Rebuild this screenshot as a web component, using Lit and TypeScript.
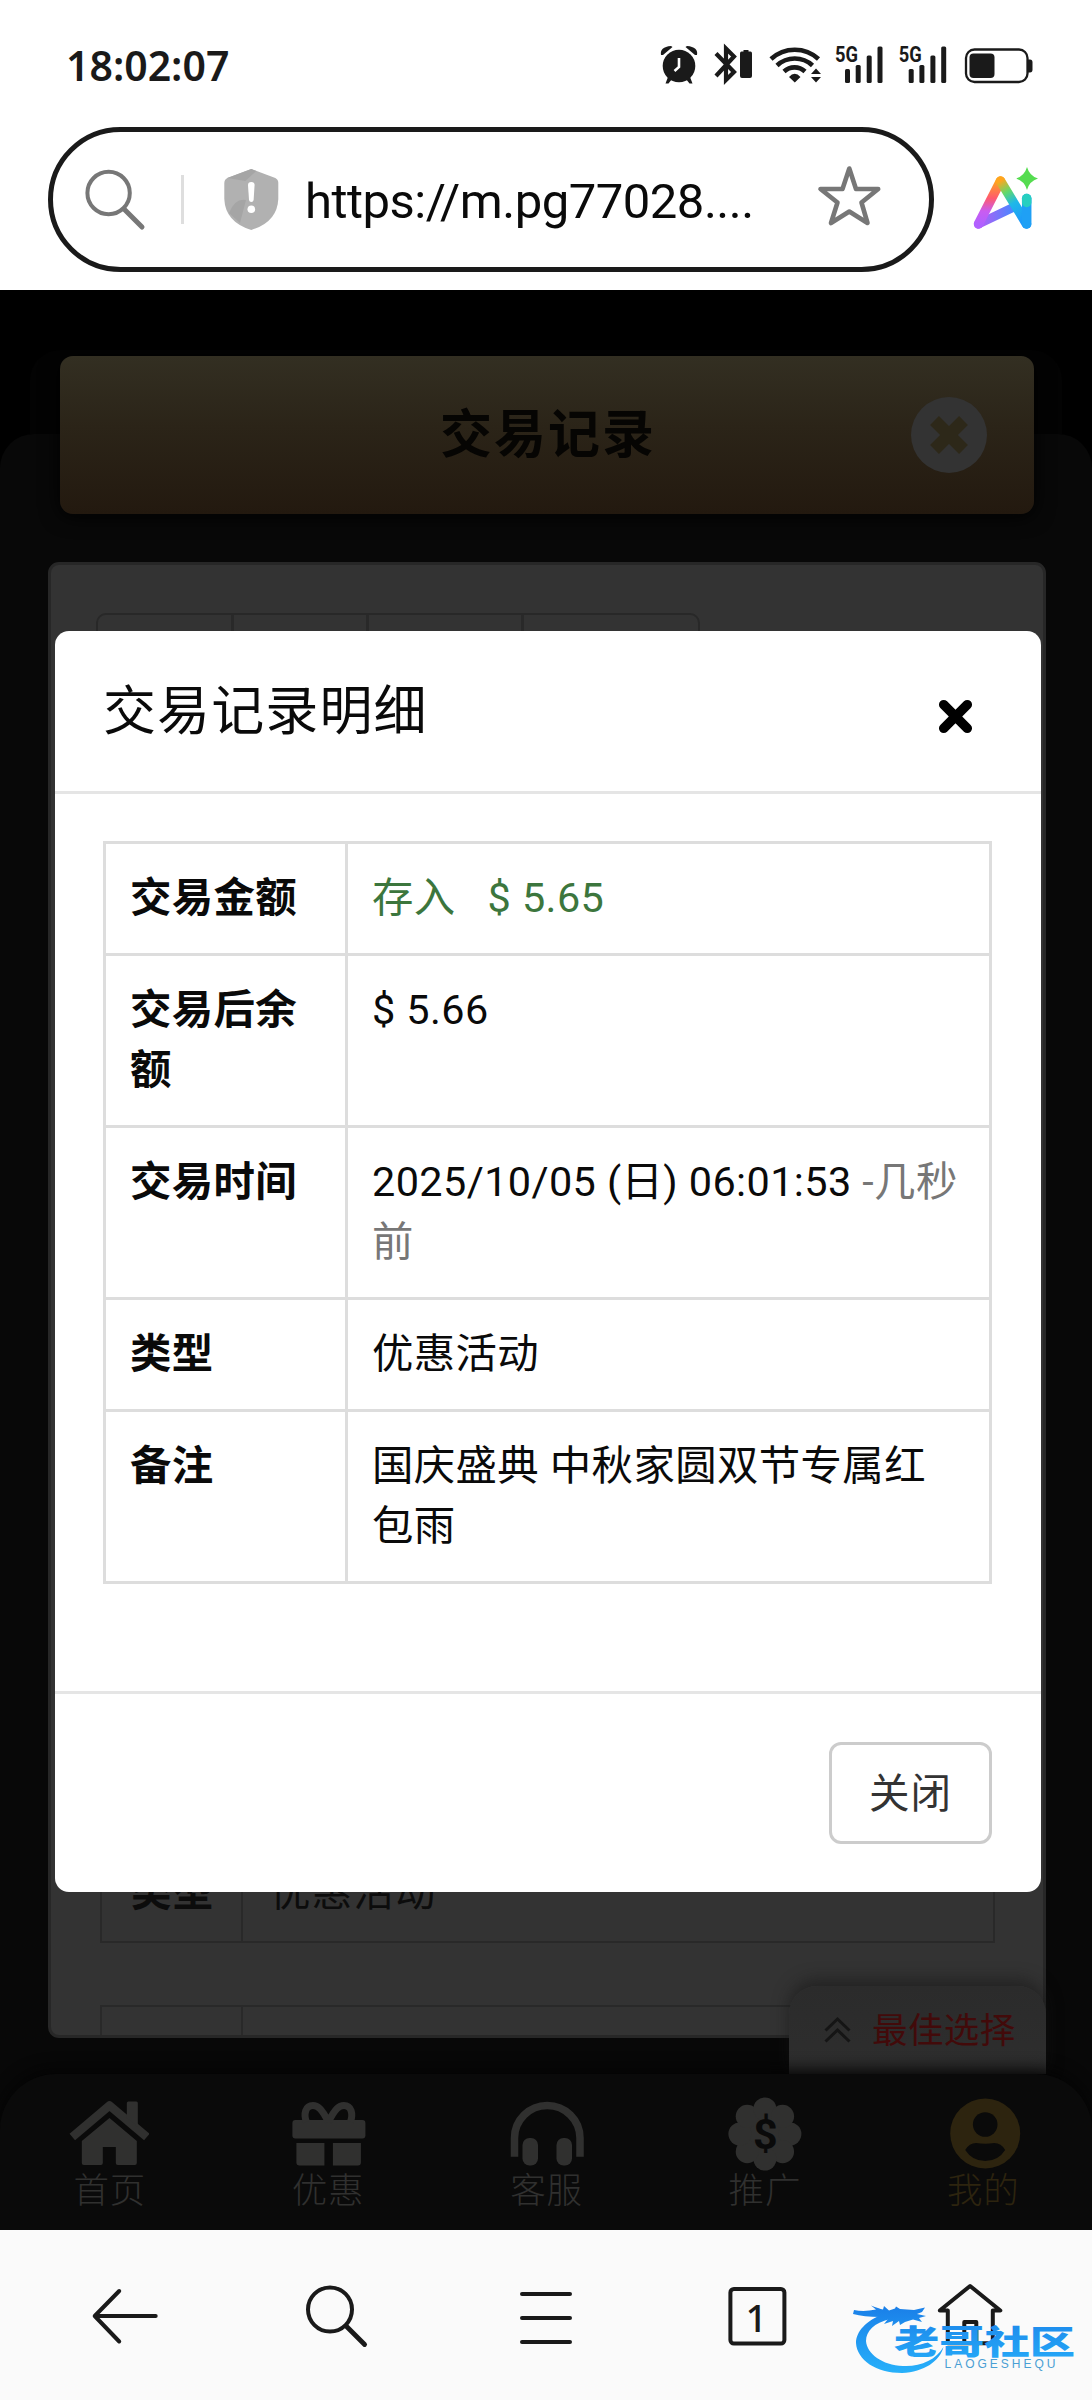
import { LitElement, html, svg, css } from "lit";
import { customElement, property } from "lit/decorators.js";

const SANS = css`Roboto, "Noto Sans CJK SC", sans-serif`;

@customElement("status-bar")
class StatusBar extends LitElement {
  static styles = css`
    :host { display: flex; justify-content: space-between; align-items: center; height: 127px; padding: 0 56px 0 66px; box-sizing: border-box; }
    .time { font: 600 41px/50px "Noto Sans", sans-serif; color: #1a1a1a; letter-spacing: 0; margin-top: 3px; }
    .icons { display: block; margin-top: 3px; }
    .net { font: 700 22px Roboto, sans-serif; }
  `;

  private signal(x: number) {
    return svg`
      <text class="net" x=${x - 10} y="63" textLength="23" lengthAdjust="spacingAndGlyphs">5G</text>
      <rect x=${x} y="70" width="5" height="14" rx="1.5"/>
      <rect x=${x + 10.7} y="66" width="5" height="18" rx="1.5"/>
      <rect x=${x + 21.7} y="56.5" width="5" height="27.5" rx="1.5"/>
      <rect x=${x + 32.5} y="47.5" width="5" height="36.5" rx="1.5"/>`;
  }

  render() {
    return html`
      <span class="time">18:02:07</span>
      <svg class="icons" width="380" height="50" viewBox="656 41 380 50" fill="#1a1a1a">
        <circle cx="679" cy="67" r="16.3"/>
        <path d="M661 56q-1.500-8 10-9l1.500 1-9.500 8zM697 56q1.500-8-10-9l-1.500 1 9.500 8zM668 78l4 2-3.500 4.500h-3zM690 78l-4 2 3.500 4.500h3z"/>
        <path d="M679 59v9l-4.500 4" fill="none" stroke="#fff" stroke-width="2.600"/>
        <path d="M716 54.500l18 18.500-8 8V49.500l8 8L716 77" fill="none" stroke="#1a1a1a" stroke-width="4.200" stroke-linejoin="miter"/>
        <path d="M743.500 51h5v1.500h2q1.500 0 1.500 2V77q0 2-2 2h-8q-2 0-2-2V54.500q0-2 1.500-2h2z"/>
        <g fill="none" stroke="#1a1a1a" stroke-width="4.600">
          <path d="M771 60a35 35 0 0 1 47.500 0M777 66.500a26 26 0 0 1 35.500 0M784 72.500a15.500 15.500 0 0 1 21 0"/>
        </g>
        <path d="M789 78q5.700-6.500 11.500 0l-5.700 5.500zM811 75l5-5.500 5 5.500zM811 78h10l-5 5.500z"/>
        ${this.signal(845)}
        ${this.signal(908.7)}
        <rect x="966" y="50.500" width="61.500" height="32.500" rx="8.500" fill="none" stroke="#1a1a1a" stroke-width="2.300"/>
        <rect x="969.500" y="54.500" width="25" height="24.500" rx="4"/>
        <path d="M1028 60.500h2q2.500 0 2.500 3v7q0 3-2.500 3h-2z"/>
      </svg>`;
  }
}

@customElement("address-bar")
class AddressBar extends LitElement {
  static styles = css`
    :host { display: flex; height: 163px; padding: 0 0 0 48px; box-sizing: border-box; align-items: flex-start; }
    .pill { display: flex; align-items: center; box-sizing: border-box; width: 886px; height: 145px; border: 5px solid #1a1a1a; border-radius: 73px; padding: 0 47px 0 30px; }
    .lens { width: 64px; height: 70px; flex: none; }
    .divider { width: 3px; height: 49px; background: #dedede; margin: 0 40px 0 34px; }
    .shield { width: 56px; height: 64px; flex: none; margin-left: -1px; }
    .url { flex: 1; margin-left: 26px; font: 400 49px/60px Roboto, sans-serif; letter-spacing: -0.5px; color: #0a0a0a; white-space: nowrap; margin-top: 5px; }
    .star { width: 64px; height: 64px; flex: none; margin-top: -7px; margin-right: 1px; }
    .ai { width: 70px; height: 70px; margin: 37px 0 0 36px; }
  `;

  render() {
    return html`
      <div class="pill">
        <svg class="lens" viewBox="83 165 64 70" fill="none" stroke="#777" stroke-linecap="round">
          <circle cx="108.600" cy="193" r="21.200" stroke-width="4"/>
          <path d="M124.500 209.500L142 227" stroke-width="5"/>
        </svg>
        <span class="divider"></span>
        <svg class="shield" viewBox="223 167 56 64">
          <path d="M251.300 168l24 9q3 1.500 3 5v16q-1 23-27 31-26-8-27-31v-16q0-3.500 3-5z" fill="#b1b1b1"/>
          <path d="M251.300 168l-24 9 18 3 11-10zM229 212q6-15 17-13l-6 23z" fill="#a5a5a5"/>
          <path d="M248 184q0-3 3.300-3t3.300 3l-1 15q-.300 2-2.300 2t-2.300-2z" fill="#fff"/>
          <circle cx="251.300" cy="208.300" r="3.800" fill="#fff"/>
        </svg>
        <span class="url">https://m.pg77028....</span>
        <svg class="star" viewBox="817 164 64 64" fill="none" stroke="#777" stroke-width="4.600" stroke-linejoin="round">
          <path d="M849.300 168.500L856 189h22.200L861.500 202.500 867.500 223 849.300 211.500 831 223 837.500 202.500 820.500 189h22z"/>
        </svg>
      </div>
      <svg class="ai" viewBox="970 165 70 70" fill="none" stroke-width="9.500" stroke-linecap="round" stroke-linejoin="round">
        <defs>
          <linearGradient id="warm" x1="0" y1="0" x2="0" y2="1">
            <stop offset="0" stop-color="#ffa51e"/><stop offset=".4" stop-color="#ff5a6e"/><stop offset=".7" stop-color="#c95cf0"/><stop offset="1" stop-color="#b160ff"/>
          </linearGradient>
          <linearGradient id="cool" gradientUnits="userSpaceOnUse" x1="1000" y1="182" x2="1027" y2="226">
            <stop offset="0" stop-color="#ffa51e"/><stop offset=".25" stop-color="#63d96a"/><stop offset=".5" stop-color="#1fb8e8"/><stop offset="1" stop-color="#1e90ff"/>
          </linearGradient>
          <linearGradient id="base" x1="0" y1="0" x2="1" y2="0">
            <stop offset="0" stop-color="#b95cf5"/><stop offset="1" stop-color="#4a86ff"/>
          </linearGradient>
        </defs>
        <path d="M978.500 225L1013 208.500" stroke="url(#base)" stroke-width="9"/>
        <path d="M1000.500 182L978.500 225" stroke="url(#warm)"/>
        <path d="M1000.500 182L1026.500 225" stroke="url(#cool)"/>
        <path d="M1026.700 199.500v25.500" stroke="#1fa0f5"/>
        <path d="M1026.700 199.500v4" stroke="#27cfc0"/>
        <path d="M1027 168q2.500 9 11 11.500-8.500 2.500-11 11.500-2.500-9-11-11.500 8.500-2.500 11-11.500z" fill="#55dc50" stroke="none"/>
      </svg>`;
  }
}

interface DetailRow { label: string; value: unknown; }

@customElement("detail-modal")
class DetailModal extends LitElement {
  static styles = css`
    :host { display: flex; flex-direction: column; background: #fff; border-radius: 14px; color: #0a0a0a; font-family: ${SANS}; }
    .head { display: flex; justify-content: space-between; align-items: center; box-sizing: border-box; height: 163px; padding: 0 63px 0 48px; border-bottom: 3px solid #e5e5e5; }
    .title { font-size: 53px; line-height: 60px; letter-spacing: 1.1px; margin-top: 1px; }
    .close { width: 45px; height: 45px; margin-top: 10px; }
    .body { box-sizing: border-box; height: 900px; padding: 47px 49px 0 48px; border-bottom: 3px solid #e5e5e5; }
    .table { display: grid; grid-template-columns: 242px 1fr; border: solid #ddd; border-width: 3px 0 0 3px; }
    .th, .td { box-sizing: border-box; padding: 24px 22px 25px 24px; border: solid #ddd; border-width: 0 3px 3px 0; font-size: 41.400px; line-height: 60px; letter-spacing: .4px; }
    .th { font-weight: 700; padding-right: 20px; }
    .in { color: #3c763d; }
    .amount { margin-left: 32px; }
    .ago { color: #777; }
    .foot { display: flex; justify-content: flex-end; padding: 48px 49px 0 0; }
    .btn { box-sizing: border-box; width: 163px; height: 102px; border: 3px solid #ccc; border-radius: 12px; background: #fff; color: #333; font: 400 40.500px ${SANS}; letter-spacing: 1px; padding: 0 0 5px; }
  `;

  private rows: DetailRow[] = [
    { label: "交易金额", value: html`<span class="in">存入<span class="amount">$ 5.65</span></span>` },
    { label: "交易后余额", value: "$ 5.66" },
    { label: "交易时间", value: html`2025/10/05 (日) 06:01:53 <span class="ago">-几秒前</span>` },
    { label: "类型", value: "优惠活动" },
    { label: "备注", value: "国庆盛典 中秋家圆双节专属红包雨" },
  ];

  render() {
    return html`
      <div class="head">
        <span class="title">交易记录明细</span>
        <svg class="close" viewBox="0 0 45 45" stroke="#000" stroke-width="9.500" stroke-linecap="round"><path d="M10.700 10.700l23.600 23.600M34.300 10.700L10.700 34.300"/></svg>
      </div>
      <div class="body">
        <div class="table">
          ${this.rows.map((r) => html`<div class="th">${r.label}</div><div class="td">${r.value}</div>`)}
        </div>
      </div>
      <div class="foot"><button class="btn">关闭</button></div>`;
  }
}

@customElement("site-nav")
class SiteNav extends LitElement {
  static styles = css`
    :host { display: grid; grid-template-columns: repeat(5, 1fr); height: 156px; background: #0a0a0a; border-radius: 56px 56px 0 0; box-shadow: 0 -4px 16px #040404; font-family: ${SANS}; }
    .item { display: flex; flex-direction: column; align-items: center; padding-top: 22px; color: #30302f; }
    .item.active { color: #2d240f; }
    .icon { width: 80px; height: 75px; fill: currentColor; }
    .label { font-size: 35.500px; line-height: 42px; font-weight: 300; letter-spacing: .8px; margin: -1px -1px 0 0; }
    .dollar { font: 700 43px Roboto, sans-serif; }
  `;

  private lobes = Array.from({ length: 8 }, (_, i) => {
    const a = (i * Math.PI) / 4;
    return svg`<circle cx=${765.3 + 25 * Math.cos(a)} cy=${2134 + 25 * Math.sin(a)} r="11.500"/>`;
  });

  private items = [
    { label: "首页", x: 69.2, art: svg`<path d="M72.500 2137L109.700 2105.500 147 2137" fill="none" stroke="currentColor" stroke-width="8.500" stroke-linejoin="round"/><path d="M127 2103q0-1.500 1.500-1.500h8q1.500 0 1.500 1.500v24l-11-9z"/><path d="M109.700 2118L137 2141v22q0 2-2 2h-17q-2 0-2-2v-16h-13v16q0 2-2 2H84q-2 0-2-2v-22z"/>` },
    { label: "优惠", x: 287.6, art: svg`<rect x="292" y="2120" width="73" height="18.500" rx="3"/><path d="M296 2143h28v22.500h-25q-3 0-3-3zM332.500 2143h28v19.500q0 3-3 3h-25z"/><path d="M328 2122C321 2108 317 2105.500 312.500 2105.500C305 2105.500 303 2114 306 2122M328 2122C335 2108 339 2105.500 343.500 2105.500C351 2105.500 353 2114 350 2122" fill="none" stroke="currentColor" stroke-width="7"/>` },
    { label: "客服", x: 506, art: svg`<path d="M514.500 2153V2138a32.700 32.500 0 0 1 65.500 0V2153" fill="none" stroke="currentColor" stroke-width="7.500" stroke-linecap="square"/><rect x="522.500" y="2138" width="15.500" height="27.500" rx="7"/><rect x="556.500" y="2138" width="15.500" height="27.500" rx="7"/>` },
    { label: "推广", x: 724.4, art: svg`<circle cx="765.300" cy="2134" r="28"/>${this.lobes}<text class="dollar" x="765.800" y="2149" text-anchor="middle" fill="#0a0a0a">$</text>` },
    { label: "我的", x: 942.8, art: svg`<circle cx="985" cy="2133.500" r="35"/><circle cx="985" cy="2124.500" r="12.300" fill="#0a0a0a"/><path d="M965 2150q4-7 11-7 9 1.500 18 0 7 0 11 7-7 11-20 11t-20-11z" fill="#0a0a0a"/>` },
  ];

  render() {
    return this.items.map((it, i) => html`
      <div class="item ${i === 4 ? "active" : ""}">
        <svg class="icon" viewBox="${it.x} 2096 80 75">${it.art}</svg>
        <span class="label">${it.label}</span>
      </div>`);
  }
}

@customElement("browser-toolbar")
class BrowserToolbar extends LitElement {
  static styles = css`
    :host { display: flex; align-items: center; justify-content: space-around; box-sizing: border-box; height: 170px; padding: 0 19.500px; background: #fafafa; position: relative; }
    .icon { width: 70px; height: 70px; fill: none; stroke: #1a1a1a; stroke-width: 4; stroke-linecap: round; stroke-linejoin: round; }
    .count { font: 500 38px "Noto Sans", sans-serif; fill: #1a1a1a; stroke: none; }
    .mark { position: absolute; left: 848px; top: 64px; width: 232px; height: 86px; }
    .markname { font: 900 33px "Noto Sans CJK SC", sans-serif; }
    .marklatin { font: 400 12px "Liberation Sans", sans-serif; }
  `;

  render() {
    return html`
      <svg class="icon" viewBox="89.800 2280 70 70"><path d="M155.500 2316H95M119 2291L94.500 2316 119 2341.500"/></svg>
      <svg class="icon" viewBox="300.400 2280 70 70"><circle cx="330.400" cy="2309.500" r="22"/><path d="M346.500 2326L365 2344.500" stroke-width="4.800"/></svg>
      <svg class="icon" viewBox="511 2280 70 70"><path d="M522 2294h48M522 2318h48M522 2342h48"/></svg>
      <svg class="icon" viewBox="721.600 2280 70 70"><rect x="730" y="2289" width="54" height="54.500" rx="3.500"/><text class="count" x="756" y="2331.500" text-anchor="middle">1</text></svg>
      <svg class="icon" viewBox="932.200 2280 70 70" overflow="visible"><path d="M947.500 2310.500h-7.500L970.300 2286 1000.500 2310.500h-7.500M948 2310.500v32.800h45v-32.800M964.500 2343V2322h12V2343"/></svg>
      <svg class="mark" viewBox="848 2294 232 86">
        <defs>
          <linearGradient id="ink" gradientUnits="userSpaceOnUse" x1="0" y1="2306" x2="0" y2="2372">
            <stop offset="0" stop-color="#1a7fe8"/><stop offset="1" stop-color="#27b0fa"/>
          </linearGradient>
        </defs>
        <g fill="url(#ink)">
          <path d="M884 2314C866 2320 856 2332 856 2343C857 2360 876 2373 902 2373C924 2372 940 2361 943.500 2347C936 2360 920 2367 903 2366C882 2365 867 2354 866 2341C866 2331 874 2323 890 2319z"/>
          <path d="M854 2310q10 2 22-.500l-5-4q8 3 12 4l1-3.500 5 4.500 6-2 1-2 4 2.500 14 1 11-2.500-3 4.500-5 2 9 2-7 2 3 4-9-2.500-8 2.500-5 3-1-4-7 5 1-5-9 3 4-5-8-2q-16 0-27-3z"/>
          <text class="markname" x="894" y="2354" textLength="181" lengthAdjust="spacingAndGlyphs">老哥社区</text>
        </g>
        <text class="marklatin" x="944.500" y="2367.500" textLength="111" fill="#4a9fd4">LAOGESHEQU</text>
      </svg>`;
  }
}

@customElement("app-root")
class AppRoot extends LitElement {
  @property({ type: String }) heading = "交易记录";

  static styles = css`
    :host { display: block; width: 1092px; height: 2400px; background: #fff; overflow: hidden; }
    .page { position: relative; display: flex; flex-direction: column; height: 1940px; background: #000; font-family: ${SANS}; overflow: hidden; }
    .shell { margin-top: 60px; height: 84px; margin-inline: 30px; border-radius: 30px 30px 0 0; background: #030303; flex: none; }
    .sheet { flex: 1; display: flex; flex-direction: column; background: #080808; border-radius: 34px 34px 0 0; padding: 0 46px 0 48px; }
    .banner { display: grid; grid-template-columns: 1fr auto 1fr; align-items: center; height: 158px; margin: -78px -1px 0 12px; width: 974px; border-radius: 13px; background: linear-gradient(#332f22, #2b2418 45%, #23190f); box-shadow: 0 2px 20px #020202; flex: none; }
    .heading { grid-column: 2; font-size: 52px; line-height: 60px; font-weight: 700; letter-spacing: 2px; color: #060503; margin: 1px -2px 0 0; }
    .x { justify-self: end; width: 76px; height: 76px; margin-right: 47px; }
    .panel { display: flex; flex-direction: column; box-sizing: border-box; height: 1476px; margin-top: 48px; background: #333; border: 3px solid #272727; border-radius: 11px; padding: 48px 50px 0 45px; overflow: hidden; flex: none; }
    .tabs { display: grid; grid-template-columns: 133px 135px 155px 177px; width: 604px; height: 100px; box-sizing: border-box; border: 2px solid #282828; border-radius: 10px; flex: none; }
    .tab + .tab { border-left: 3px solid #292929; }
    .records { display: flex; flex-direction: column; gap: 62px; margin: 1106px -2px 0 4px; flex: none; }
    .record { display: grid; grid-template-columns: 141px 1fr; height: 124px; box-sizing: border-box; border: 2px solid #292929; font-size: 40.500px; line-height: 60px; color: #0c0c0c; letter-spacing: 1.200px; }
    .key { font-weight: 700; padding: 41px 0 0 29px; border-right: 2px solid #292929; }
    .val { padding: 41px 0 0 27px; }
    .best { position: absolute; left: 789px; top: 1696px; width: 257px; height: 88px; box-sizing: border-box; display: flex; align-items: center; gap: 21px; padding: 0 0 0 35px; background: linear-gradient(#2b2b2b, #2e2e2e); border-radius: 28px 28px 0 0; box-shadow: 0 -6px 16px rgba(20, 20, 20, .55); color: #420a0a; font-size: 35.500px; white-space: nowrap; }
    .besttext { margin-top: -5px; letter-spacing: .4px; }
    .chev { width: 27px; height: 27px; fill: none; stroke: #151515; stroke-width: 3; flex: none; margin-top: -2px; }
    .nav { position: absolute; left: 0; right: 0; bottom: 0; }
    .modal { position: absolute; left: 55px; top: 341px; width: 986px; height: 1261px; }
  `;

  render() {
    return html`
      <status-bar></status-bar>
      <address-bar></address-bar>
      <main class="page">
        <div class="shell"></div>
        <section class="sheet">
          <header class="banner">
            <span class="heading">${this.heading}</span>
            <svg class="x" viewBox="-38 -38 76 76"><circle r="38" fill="#333"/><path d="M-14.500-14.500L14.500 14.500M14.500-14.500L-14.500 14.500" stroke="#2d2819" stroke-width="12.500"/></svg>
          </header>
          <div class="panel">
            <div class="tabs"><span class="tab"></span><span class="tab"></span><span class="tab"></span><span class="tab"></span></div>
            <div class="records">
              <div class="record"><span class="key">类型</span><span class="val">优惠活动</span></div>
              <div class="record"><span class="key"></span><span class="val"></span></div>
            </div>
          </div>
        </section>
        <div class="best">
          <svg class="chev" viewBox="0 0 27 27"><path d="M1.500 14.500L13.500 3l12 11.500M1.500 25.500L13.500 14l12 11.500"/></svg>
          <span class="besttext">最佳选择</span>
        </div>
        <site-nav class="nav"></site-nav>
        <detail-modal class="modal"></detail-modal>
      </main>
      <browser-toolbar></browser-toolbar>`;
  }
}
